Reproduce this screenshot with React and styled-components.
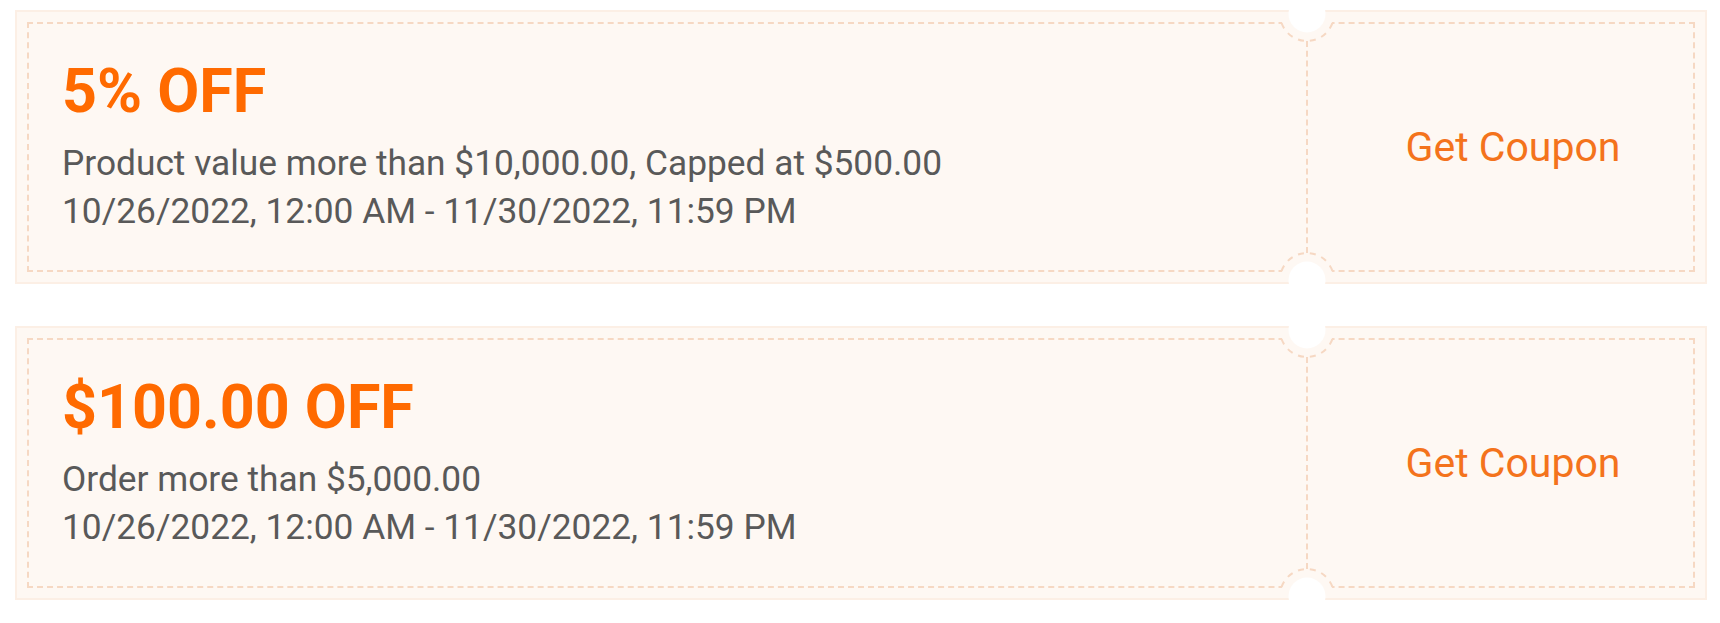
import React from "react";
import styled, { createGlobalStyle } from "styled-components";

const coupons = [
  {
    id: 1,
    title: "5% OFF",
    rule: "Product value more than $10,000.00, Capped at $500.00",
    period: "10/26/2022, 12:00 AM - 11/30/2022, 11:59 PM",
  },
  {
    id: 2,
    title: "$100.00 OFF",
    rule: "Order more than $5,000.00",
    period: "10/26/2022, 12:00 AM - 11/30/2022, 11:59 PM",
  },
];

const CARD_BG = "#fef8f3";
const EDGE = "#fcefe5";
const DASH = "#f6d8c3";

// the half-moon cut with its dashed perforation, drawn once, flipped for the bottom
const Notch = ({ bottom }) => (
  <NotchArt
    $bottom={bottom}
    width="80"
    height="40"
    viewBox="0 0 80 40"
    aria-hidden="true"
  >
    <circle cx="40" cy="4" r="26.5" fill={CARD_BG} />
    <rect x="0" y="0" width="80" height="2" fill={EDGE} />
    <circle cx="40" cy="4" r="18.5" fill="#fff" />
    <path
      d="M14.54 13 A27 27 0 0 0 65.46 13"
      fill="none"
      stroke={DASH}
      strokeWidth="2"
      strokeDasharray="6 6"
    />
  </NotchArt>
);

const CouponCard = ({ coupon }) => (
  <Card>
    <Info>
      <Title>{coupon.title}</Title>
      <Line>{coupon.rule}</Line>
      <Line>{coupon.period}</Line>
    </Info>
    <Action>
      <GetButton type="button">Get Coupon</GetButton>
    </Action>
    <Notch />
    <Notch bottom />
  </Card>
);

const App = () => (
  <>
    <GlobalStyle />
    <List>
      {coupons.map((c) => (
        <CouponCard key={c.id} coupon={c} />
      ))}
    </List>
  </>
);

const GlobalStyle = createGlobalStyle`
  body {
    margin: 0;
    background: #fff;
    font-family: Roboto, "Liberation Sans", Arial, sans-serif;
  }
`;

const List = styled.div`
  display: flex;
  flex-direction: column;
  gap: 42px;
  padding: 10px 13px 10px 15px;
`;

const Card = styled.div`
  position: relative;
  display: grid;
  grid-template-columns: 1fr 400px;
  min-height: 274px;
  background: ${CARD_BG};
  box-shadow: inset 0 0 0 2px ${EDGE};
  overflow: hidden;

  &::before {
    content: "";
    position: absolute;
    inset: 12px;
    border: 2px dashed ${DASH};
    pointer-events: none;
  }
`;

const Info = styled.div`
  display: flex;
  flex-direction: column;
  justify-content: center;
  padding: 0 0 4px 47px;
`;

const Title = styled.h2`
  margin: 0 0 12px;
  font-size: 61px;
  line-height: 72px;
  font-weight: 700;
  color: #ff6a00;
`;

const Line = styled.p`
  margin: 0;
  font-size: 35.3px;
  line-height: 48px;
  color: #595959;
`;

const Action = styled.div`
  position: relative;
  display: flex;
  align-items: center;
  justify-content: center;
  padding-left: 12px;

  &::before {
    content: "";
    position: absolute;
    left: -1px;
    top: 31px;
    bottom: 31px;
    border-left: 2px dashed ${DASH};
  }
`;

const GetButton = styled.button`
  border: 0;
  background: none;
  padding: 0;
  font-family: inherit;
  font-size: 41px;
  color: #f4731c;
  cursor: pointer;
`;

const NotchArt = styled.svg`
  position: absolute;
  left: calc(100% - 440px);
  ${(p) => (p.$bottom ? "bottom: 0; transform: scaleY(-1);" : "top: 0;")}
  display: block;
`;

export default App;
